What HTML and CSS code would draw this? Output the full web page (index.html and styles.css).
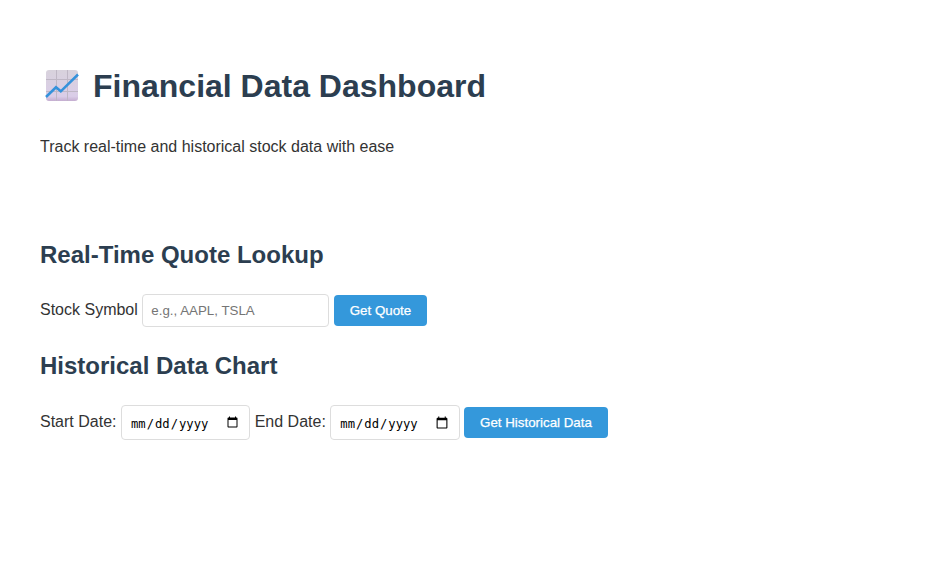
FILE: index.html
```html
<!DOCTYPE html>
<html lang="en">
<head>
<meta charset="utf-8">
<title>Financial Data Dashboard</title>
<link rel="stylesheet" href="styles.css">
</head>
<body>
<header>
  <h1><svg class="logo" viewBox="0 0 34 34" width="34" height="34" aria-hidden="true"><defs><linearGradient id="tile" x1="0" y1="0" x2="0" y2="1"><stop offset="0" stop-color="#d8d2dc"/><stop offset=".85" stop-color="#dacde8"/><stop offset="1" stop-color="#c4add0"/></linearGradient></defs><rect x="1" y="1" width="32" height="31" rx="3" fill="url(#tile)"/><path d="M11.500 1V32M22.500 1V32M1 10.500H33M1 22.500H33" stroke="#bfb7c5" fill="none"/><path d="M1 28L11 18.300L15.800 22.300L33 5.500" stroke="#3592db" stroke-width="2.500" fill="none"/></svg>Financial Data Dashboard</h1>
  <p>Track real-time and historical stock data with ease</p>
</header>
<section>
  <h2>Real-Time Quote Lookup</h2>
  <label for="symbol">Stock Symbol</label>
  <input type="text" id="symbol" placeholder="e.g., AAPL, TSLA">
  <button>Get Quote</button>
</section>
<section>
  <h2>Historical Data Chart</h2>
  <label for="start">Start Date:</label>
  <input type="date" id="start">
  <label for="end">End Date:</label>
  <input type="date" id="end">
  <button>Get Historical Data</button>
</section>
</body>
</html>
```
FILE: styles.css
```css
body {
  margin: 40px;
  font-family: "Liberation Sans", Arial, sans-serif;
  line-height: 1.6;
  color: #333;
}
header { margin-bottom: 76px; }
h1, h2 { color: #2c3e50; }
.logo { margin: 0 14px 0 5px; vertical-align: -6px; }
input {
  box-sizing: border-box;
  padding: 8px;
  border: 1px solid #ddd;
  border-radius: 4px;
}
input[type="text"] { width: 187px; }
input[type="date"] {
  width: 129.300px;
  height: 35px;
  padding: 9px 8px 7px;
  font-family: "DejaVu Sans Mono", monospace;
  font-size: 12.200px;
  vertical-align: -1px;
}
input::-webkit-calendar-picker-indicator {
  width: 13.333px;
  height: 13.333px;
  margin-top: -2px;
}
button {
  padding: 8px 16px;
  border: none;
  border-radius: 4px;
  background: #3498db;
  color: white;
  -webkit-text-stroke: 0.250px white;
}
```
